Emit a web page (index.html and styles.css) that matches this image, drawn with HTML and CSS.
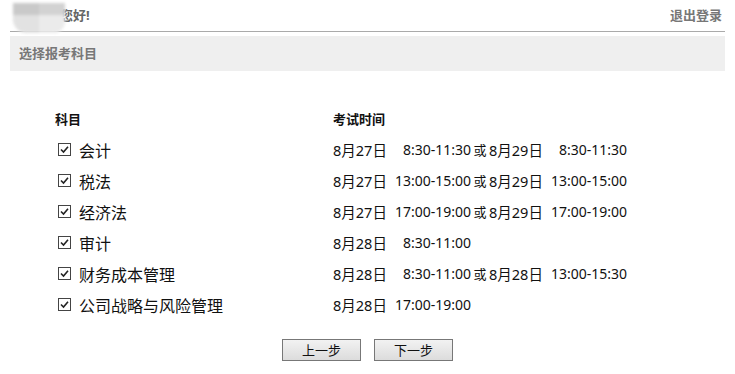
FILE: index.html
```html
<!DOCTYPE html>
<html lang="zh">
<head>
<meta charset="utf-8">
<link rel="stylesheet" href="styles.css">
</head>
<body>
<div class="page">
  <div class="topbar">
    <div class="hello"><span class="hello-text">您好!</span><span class="blurname"><i class="m1"></i><i class="m2"></i><i class="m3"></i><i class="m4"></i></span></div>
    <a class="logout">退出登录</a>
  </div>
  <div class="titlebar">选择报考科目</div>
  <div class="table">
    <div class="row head"><div class="c1">科目</div><div class="c2">考试时间</div></div>
    <div class="row"><div class="c1"><span class="cb"><svg viewBox="0 0 13 13" width="13" height="13"><rect x="0.5" y="0.5" width="12" height="12" fill="#fff" stroke="#444"/><path d="M3 6.5 L5.5 9 L10 3.8" fill="none" stroke="#222" stroke-width="1.6"/></svg></span>会计</div><div class="c2"><span class="d">8月27日</span><span class="t">8:30-11:30</span><span class="or">或</span><span class="d">8月29日</span><span class="t">8:30-11:30</span></div></div>
    <div class="row"><div class="c1"><span class="cb"><svg viewBox="0 0 13 13" width="13" height="13"><rect x="0.5" y="0.5" width="12" height="12" fill="#fff" stroke="#444"/><path d="M3 6.5 L5.5 9 L10 3.8" fill="none" stroke="#222" stroke-width="1.6"/></svg></span>税法</div><div class="c2"><span class="d">8月27日</span><span class="t">13:00-15:00</span><span class="or">或</span><span class="d">8月29日</span><span class="t">13:00-15:00</span></div></div>
    <div class="row"><div class="c1"><span class="cb"><svg viewBox="0 0 13 13" width="13" height="13"><rect x="0.5" y="0.5" width="12" height="12" fill="#fff" stroke="#444"/><path d="M3 6.5 L5.5 9 L10 3.8" fill="none" stroke="#222" stroke-width="1.6"/></svg></span>经济法</div><div class="c2"><span class="d">8月27日</span><span class="t">17:00-19:00</span><span class="or">或</span><span class="d">8月29日</span><span class="t">17:00-19:00</span></div></div>
    <div class="row"><div class="c1"><span class="cb"><svg viewBox="0 0 13 13" width="13" height="13"><rect x="0.5" y="0.5" width="12" height="12" fill="#fff" stroke="#444"/><path d="M3 6.5 L5.5 9 L10 3.8" fill="none" stroke="#222" stroke-width="1.6"/></svg></span>审计</div><div class="c2"><span class="d">8月28日</span><span class="t">8:30-11:00</span></div></div>
    <div class="row"><div class="c1"><span class="cb"><svg viewBox="0 0 13 13" width="13" height="13"><rect x="0.5" y="0.5" width="12" height="12" fill="#fff" stroke="#444"/><path d="M3 6.5 L5.5 9 L10 3.8" fill="none" stroke="#222" stroke-width="1.6"/></svg></span>财务成本管理</div><div class="c2"><span class="d">8月28日</span><span class="t">8:30-11:00</span><span class="or">或</span><span class="d">8月28日</span><span class="t">13:00-15:30</span></div></div>
    <div class="row"><div class="c1"><span class="cb"><svg viewBox="0 0 13 13" width="13" height="13"><rect x="0.5" y="0.5" width="12" height="12" fill="#fff" stroke="#444"/><path d="M3 6.5 L5.5 9 L10 3.8" fill="none" stroke="#222" stroke-width="1.6"/></svg></span>公司战略与风险管理</div><div class="c2"><span class="d">8月28日</span><span class="t">17:00-19:00</span></div></div>
  </div>
  <div class="buttons">
    <button class="btn">上一步</button>
    <button class="btn">下一步</button>
  </div>
</div>
</body>
</html>
```
FILE: styles.css
```css
html, body { margin: 0; padding: 0; background: #fff; }
body { font-family: "Noto Sans", "Noto Sans CJK SC", sans-serif; color: #111; }
.page { padding: 0 10px; width: 715px; }
.topbar { display: flex; justify-content: space-between; align-items: center; height: 31px; border-bottom: 1px solid #aaa; }
.hello { position: relative; display: flex; align-items: center; height: 31px; }
.hello-text { font-size: 13px; font-weight: bold; color: #666; margin-left: 50px; margin-top: -3px; }
.blurname { position: absolute; left: 3px; top: 3px; width: 52px; height: 30px; filter: blur(1.5px); border-radius: 0 0 12px 14px; overflow: hidden; background: #e6e6e6; }
.blurname i { position: absolute; display: block; }
.blurname .m1 { left: 0; top: 0; width: 26px; height: 12px; background: #c9c9c9; }
.blurname .m2 { left: 26px; top: 0; width: 26px; height: 12px; background: #d2d2d2; }
.blurname .m3 { left: 0; top: 12px; width: 26px; height: 18px; background: #e2e2e2; }
.blurname .m4 { left: 26px; top: 12px; width: 26px; height: 18px; background: #ebebeb; }
.logout { font-size: 13px; font-weight: bold; color: #777; margin-right: 3px; margin-top: -3px; }
.titlebar { margin-top: 4px; height: 35px; line-height: 35px; background: #efefef; padding-left: 9px; font-size: 13px; font-weight: bold; color: #777; }
.table { padding: 35px 0 0 45px; }
.row { display: flex; height: 31px; align-items: center; font-size: 16px; }
.row.head { font-size: 13px; font-weight: bold; height: 24px; margin-bottom: 4px; }
.c1 { width: 278px; display: flex; align-items: center; }
.cb { display: inline-flex; margin-left: 3px; margin-right: 8px; }
.c2 { display: flex; align-items: center; white-space: nowrap; }
.row:not(.head) .c2 { font-size: 14.5px; }
.d { display: inline-block; width: 55px; }
.row:not(.head) .c2 .t { display: inline-block; width: 83px; text-align: right; font-size: 14px; }
.or { display: inline-block; width: 18px; text-align: center; font-size: 13px; }
.buttons { display: flex; justify-content: center; gap: 13px; margin-top: 19px; }
.btn { width: 79px; height: 22px; border: 1px solid #777; background: linear-gradient(#f2f2f2, #dcdcdc); font-family: "Noto Sans CJK SC", sans-serif; font-size: 13px; color: #111; padding: 0; line-height: 18px; }
```
